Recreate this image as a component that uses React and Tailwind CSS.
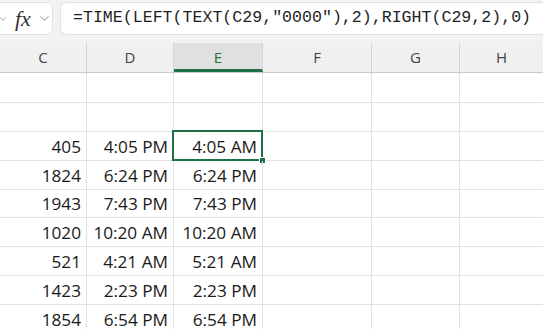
import React from "react";

const cols = [
  { key: "C", w: "w-[87px]" },
  { key: "D", w: "w-[87px]" },
  { key: "E", w: "w-[89px]" },
  { key: "F", w: "w-[109px]" },
  { key: "G", w: "w-[88px]" },
  { key: "H", w: "flex-1" },
];

const rows = [
  { h: "h-[30px]", c: "", d: "", e: "" },
  { h: "h-[29px]", c: "", d: "", e: "" },
  { h: "h-[29px]", c: "405", d: "4:05 PM", e: "4:05 AM", sel: true },
  { h: "h-[29px]", c: "1824", d: "6:24 PM", e: "6:24 PM" },
  { h: "h-[28px]", c: "1943", d: "7:43 PM", e: "7:43 PM" },
  { h: "h-[29px]", c: "1020", d: "10:20 AM", e: "10:20 AM" },
  { h: "h-[29px]", c: "521", d: "4:21 AM", e: "5:21 AM" },
  { h: "h-[29px]", c: "1423", d: "2:23 PM", e: "2:23 PM" },
  { h: "h-[29px]", c: "1854", d: "6:54 PM", e: "6:54 PM" },
];

const Chevron = ({ className }) => (
  <svg viewBox="0 0 12 8" className={className} fill="none" stroke="#8a8a8a" strokeWidth="1.1">
    <path d="M1.5 1.5 L6 6 L10.5 1.5" />
  </svg>
);

const Cell = ({ w, value, last, children }) => (
  <div
    className={`${w} relative flex items-end justify-end pr-[5px] pb-[5px] text-[17.2px] leading-none text-[#1a1a1a] ${
      last ? "" : "border-r border-[#e1e1e1]"
    }`}
  >
    {value}
    {children}
  </div>
);

export default function App() {
  return (
    <div className="w-[543px] h-[329px] overflow-hidden bg-white" style={{ fontFamily: "'Open Sans', 'Noto Sans', sans-serif" }}>
      {/* Formula bar */}
      <div className="h-[43px] bg-[#f4f1f3] flex items-start pt-[2px]">
        <div className="w-[63px] -ml-[10px] h-[33px] bg-white border border-[#e2e0e1] rounded-[6px] flex items-center shrink-0">
          <Chevron className="w-[8px] h-[6px] ml-[8px]" />
          <span className="ml-[8px] text-[22px] leading-none italic text-[#333]" style={{ fontFamily: "'Liberation Serif', serif" }}>
            fx
          </span>
          <Chevron className="w-[11px] h-[7px] ml-[8px]" />
        </div>
        <div className="ml-[7px] flex-1 h-[33px] bg-white border border-[#e2e0e1] rounded-l-[6px] border-r-0 flex items-center pl-[12px] whitespace-nowrap overflow-hidden">
          <span className="text-[16.6px] text-[#1f1f1f]" style={{ fontFamily: "'Liberation Mono', monospace" }}>
            =TIME(LEFT(TEXT(C29,"0000"),2),RIGHT(C29,2),0)
          </span>
        </div>
      </div>

      {/* Column headers */}
      <div className="h-[30px] flex bg-[#f0f0f0] border-b border-[#c9c9c9]">
        {cols.map((c, i) => (
          <div
            key={c.key}
            className={`${c.w} flex items-center justify-center text-[15px] ${
              i < cols.length - 1 ? "border-r border-[#d4d4d4]" : ""
            } ${c.key === "E" ? "bg-[#e0e0e0] text-[#1e7145] border-b-[3px] border-b-[#1e7145] pt-[3px]" : "text-[#444]"}`}
          >
            {c.key}
          </div>
        ))}
      </div>

      {/* Grid */}
      <div className="flex flex-col">
        {rows.map((r, i) => (
          <div key={i} className={`${r.h} shrink-0 flex border-b border-[#e1e1e1]`}>
            <Cell w="w-[87px]" value={r.c} />
            <Cell w="w-[87px]" value={r.d} />
            <Cell w="w-[89px]" value={r.e}>
              {r.sel && (
                <>
                  <div className="absolute -left-[2px] -top-[2px] -right-[1px] -bottom-[1px] border-2 border-[#1e7145]" />
                  <div className="absolute -right-[4px] -bottom-[4px] w-[7px] h-[7px] bg-[#1e7145] border border-white" />
                </>
              )}
            </Cell>
            <Cell w="w-[109px]" />
            <Cell w="w-[88px]" />
            <Cell w="flex-1" last />
          </div>
        ))}
      </div>
    </div>
  );
}
